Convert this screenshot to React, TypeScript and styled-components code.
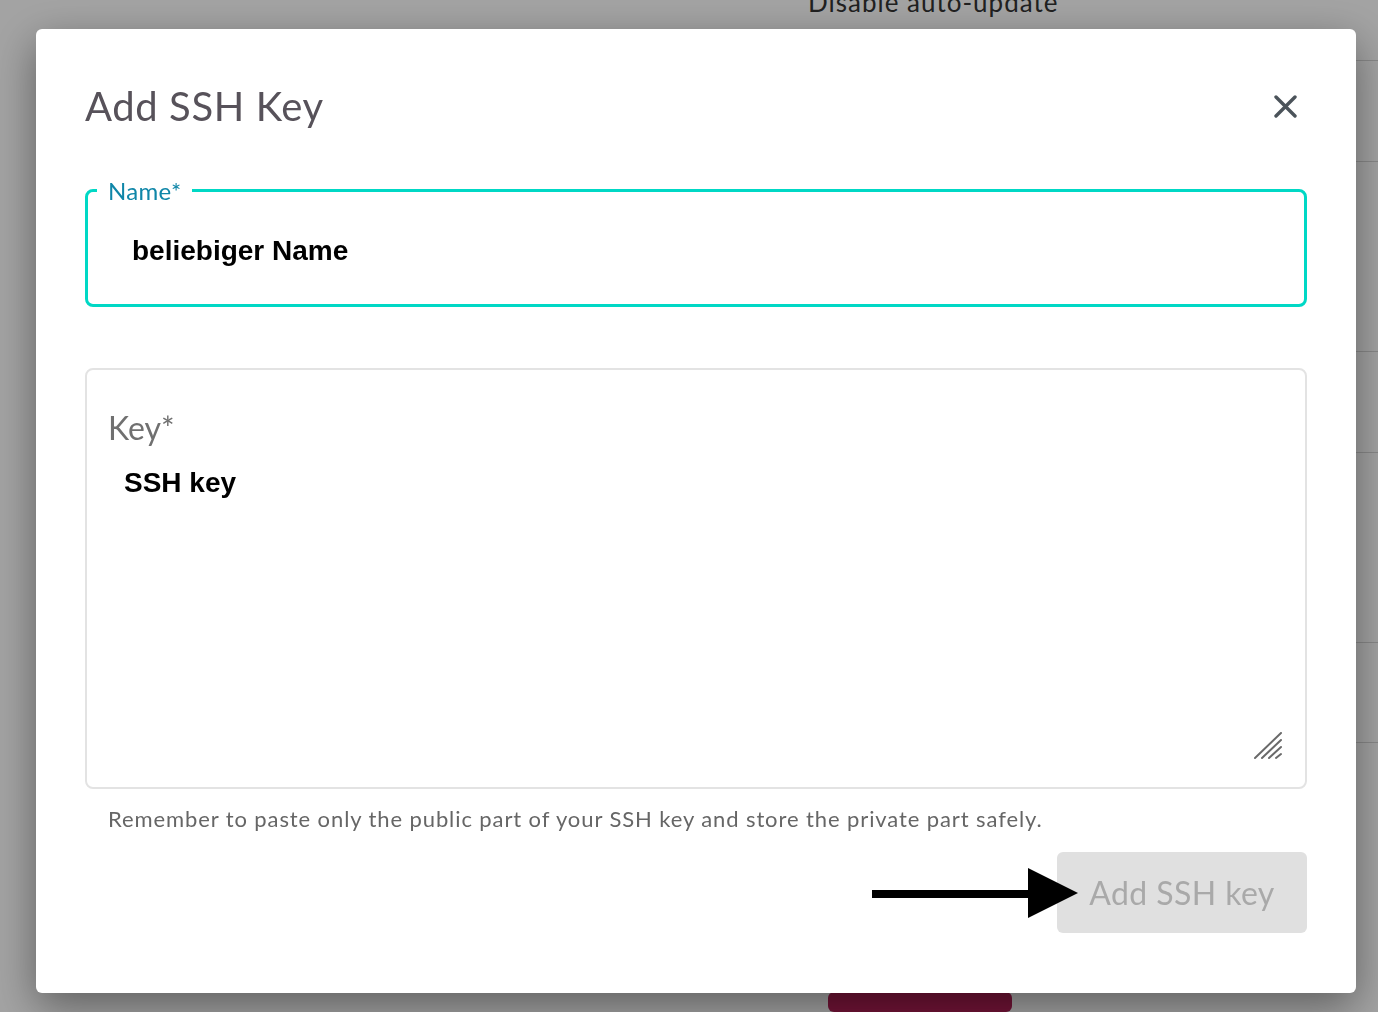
import React from 'react'
import styled, { createGlobalStyle } from 'styled-components'

const GlobalStyle = createGlobalStyle`
  html, body {
    margin: 0;
    padding: 0;
    background: #ffffff;
    font-family: 'Lato', 'Open Sans', sans-serif;
    overflow: hidden;
  }
  * {
    box-sizing: border-box;
  }
`

// page lying behind the dialog
const Page = styled.div`
  width: 1378px;
  height: 1012px;
  display: flex;
  justify-content: flex-end;
  background: #ffffff;
`

const SettingsColumn = styled.div`
  width: 570px;
  display: flex;
  flex-direction: column;
`

const SettingRow = styled.div<{ $height: number }>`
  height: ${({ $height }) => $height}px;
  border-bottom: 1px solid #d6d6d6;
  flex-shrink: 0;
`

const SettingText = styled.div`
  margin-top: -12px;
  font-size: 26px;
  line-height: 28px;
  letter-spacing: 1px;
  color: #333333;
`

const SaveButton = styled.div`
  margin: 249px 0 0 20px;
  width: 184px;
  height: 50px;
  border-radius: 6px;
  background: #b41f56;
`

const Overlay = styled.div`
  position: fixed;
  inset: 0;
  background: rgba(0, 0, 0, 0.36);
  display: flex;
  padding: 29px 22px 19px 36px;
`

const Modal = styled.div`
  flex: 1;
  background: #ffffff;
  border-radius: 6px;
  box-shadow: 0 14px 44px rgba(0, 0, 0, 0.42);
  padding: 53px 49px 0 49px;
  display: flex;
  flex-direction: column;
`

const Header = styled.div`
  display: flex;
  align-items: center;
  justify-content: space-between;
`

const Title = styled.h2`
  margin: 0;
  font-size: 40px;
  line-height: 48px;
  font-weight: 400;
  letter-spacing: 0.6px;
  color: #57525a;
`

const CloseButton = styled.button`
  border: none;
  background: none;
  padding: 0;
  margin-right: 10px;
  width: 23px;
  height: 23px;
  display: flex;
  cursor: pointer;
`

const NameField = styled.fieldset`
  margin: 46px 0 0 0;
  padding: 0 0 30px 0;
  border: 3px solid #00d8c5;
  border-radius: 8px;
  min-width: 0;
`

const NameLegend = styled.legend`
  margin-left: 9px;
  padding: 2px 11px 0 11px;
  font-size: 24px;
  line-height: 26px;
  letter-spacing: 0.3px;
  color: #0f86a8;
`

const NameInput = styled.input`
  display: block;
  margin: 24px 0 0 44px;
  width: calc(100% - 88px);
  height: 46px;
  padding: 0;
  border: none;
  outline: none;
  font-family: 'Liberation Sans', Arial, sans-serif;
  font-weight: 700;
  font-size: 28px;
  color: #000000;
  background: transparent;
`

const KeyBox = styled.div`
  position: relative;
  margin-top: 61px;
  height: 421px;
  border: 2px solid #e3e3e3;
  border-radius: 8px;
  padding: 39px 21px 0 21px;
  display: flex;
  flex-direction: column;
`

const KeyLabel = styled.label`
  font-size: 32px;
  line-height: 38px;
  color: #707070;
`

const KeyArea = styled.textarea`
  margin-top: 20px;
  flex: 1;
  padding: 0 0 0 16px;
  border: none;
  outline: none;
  resize: none;
  font-family: 'Liberation Sans', Arial, sans-serif;
  font-weight: 700;
  font-size: 28px;
  line-height: 32px;
  color: #000000;
  background: transparent;
`

const ResizeHandle = styled.svg`
  position: absolute;
  right: 23px;
  bottom: 27px;
`

const Hint = styled.p`
  margin: 17px 0 0 23px;
  font-size: 22px;
  line-height: 26px;
  letter-spacing: 0.9px;
  color: #666666;
`

const Footer = styled.div`
  margin-top: 20px;
  display: flex;
  justify-content: flex-end;
  align-items: center;
`

const Pointer = styled.svg`
  margin-right: -21px;
  position: relative;
  z-index: 1;
  flex-shrink: 0;
`

const SubmitButton = styled.button`
  width: 250px;
  height: 81px;
  border: none;
  border-radius: 6px;
  background: #e0e0e0;
  font-family: 'Lato', 'Open Sans', sans-serif;
  font-size: 32px;
  letter-spacing: 0.4px;
  color: #a9a9a9;
  cursor: default;
`

const rows = [61, 101, 190, 101, 190, 100]

const App = () => (
  <>
    <GlobalStyle />
    <Page>
      <SettingsColumn>
        {rows.map((h, i) => (
          <SettingRow key={i} $height={h}>
            {i === 0 && <SettingText>Disable auto-update</SettingText>}
          </SettingRow>
        ))}
        <SaveButton />
      </SettingsColumn>
    </Page>
    <Overlay>
      <Modal>
        <Header>
          <Title>Add SSH Key</Title>
          <CloseButton aria-label="close">
            <svg width="23" height="23" viewBox="0 0 23 23">
              <path d="M2 2 L21 21 M21 2 L2 21" stroke="#4b535a" strokeWidth="3.4" strokeLinecap="round" />
            </svg>
          </CloseButton>
        </Header>

        <NameField>
          <NameLegend>Name*</NameLegend>
          <NameInput defaultValue="beliebiger Name" />
        </NameField>

        <KeyBox>
          <KeyLabel>Key*</KeyLabel>
          <KeyArea defaultValue="SSH key" />
          <ResizeHandle width="28" height="28" viewBox="0 0 28 28">
            <g stroke="#6a6a6a" strokeWidth="2" strokeLinecap="round">
              <line x1="1" y1="26" x2="27" y2="1" />
              <line x1="8" y1="26" x2="27" y2="8" />
              <line x1="15" y1="26" x2="27" y2="15" />
              <line x1="22" y1="26" x2="27" y2="22" />
            </g>
          </ResizeHandle>
        </KeyBox>

        <Hint>Remember to paste only the public part of your SSH key and store the private part safely.</Hint>

        <Footer>
          <Pointer width="206" height="50" viewBox="0 0 206 50">
            <rect x="0" y="22" width="160" height="8" fill="#000" />
            <polygon points="156,0 206,25 156,50" fill="#000" />
          </Pointer>
          <SubmitButton disabled>Add SSH key</SubmitButton>
        </Footer>
      </Modal>
    </Overlay>
  </>
)

export default App
